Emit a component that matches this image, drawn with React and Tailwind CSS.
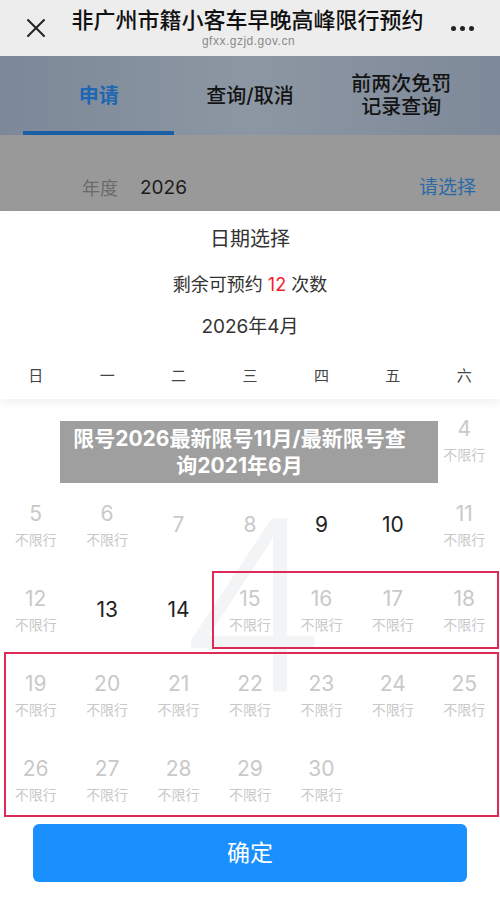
import React from "react";

const weekdays = ["日", "一", "二", "三", "四", "五", "六"];

// kind: "limit" = gray with 不限行, "off" = gray number only, "open" = selectable
// 1–3 April sit under the caption banner, so they are left blank
const weeks = [
  [null, null, null, null, null, null, { d: 4, k: "limit" }],
  [{ d: 5, k: "limit" }, { d: 6, k: "limit" }, { d: 7, k: "off" }, { d: 8, k: "off" }, { d: 9, k: "open" }, { d: 10, k: "open" }, { d: 11, k: "limit" }],
  [{ d: 12, k: "limit" }, { d: 13, k: "open" }, { d: 14, k: "open" }, { d: 15, k: "limit" }, { d: 16, k: "limit" }, { d: 17, k: "limit" }, { d: 18, k: "limit" }],
  [{ d: 19, k: "limit" }, { d: 20, k: "limit" }, { d: 21, k: "limit" }, { d: 22, k: "limit" }, { d: 23, k: "limit" }, { d: 24, k: "limit" }, { d: 25, k: "limit" }],
  [{ d: 26, k: "limit" }, { d: 27, k: "limit" }, { d: 28, k: "limit" }, { d: 29, k: "limit" }, { d: 30, k: "limit" }, null, null],
];

function DayCell({ day }) {
  if (!day) return <div className="h-[85px]" />;
  if (day.k === "limit") {
    return (
      <div className="h-[85px] flex flex-col items-center justify-center gap-[5px] pb-[2px]">
        <span className="text-[21px] leading-[24px] text-[#c9c9c9]">{day.d}</span>
        <span className="text-[14px] leading-[18px] text-[#c9c9c9]">不限行</span>
      </div>
    );
  }
  return (
    <div className="h-[85px] flex items-center justify-center pb-[4px]">
      <span className={`text-[21px] leading-[24px] ${day.k === "open" ? "text-[#222]" : "text-[#c9c9c9]"}`}>
        {day.d}
      </span>
    </div>
  );
}

export default function App() {
  return (
    <div className="w-[500px] h-[906px] overflow-hidden relative bg-white font-[Inter,'Noto_Sans_CJK_SC',sans-serif]">
      {/* browser top bar */}
      <div className="h-[56px] bg-[#ededed] flex items-center pl-[26px] pr-[26px] relative">
        <svg width="20" height="20" viewBox="0 0 20 20" className="text-[#222] shrink-0">
          <path d="M2 2 L18 18 M18 2 L2 18" stroke="currentColor" strokeWidth="2" strokeLinecap="round" />
        </svg>
        <div className="flex-1 flex flex-col items-center pb-[3px]">
          <div className="text-[22px] leading-[28px] font-medium text-[#111] mr-[2px] whitespace-nowrap">非广州市籍小客车早晚高峰限行预约</div>
          <div className="text-[12px] leading-[14px] text-[#8a8a8a] tracking-[0.5px] font-['Liberation_Sans',sans-serif]">gfxx.gzjd.gov.cn</div>
        </div>
        <div className="flex gap-[4px] items-center shrink-0">
          <span className="w-[5px] h-[5px] rounded-full bg-[#222]" />
          <span className="w-[5px] h-[5px] rounded-full bg-[#222]" />
          <span className="w-[5px] h-[5px] rounded-full bg-[#222]" />
        </div>
      </div>

      {/* dimmed tab bar */}
      <div className="h-[79px] bg-gradient-to-r from-[#7c8898] via-[#8d97a3] to-[#7e8999] grid grid-cols-3 px-[23px]">
        <div className="flex items-center justify-center text-[20px] font-bold text-[#1f66b3] relative">
          申请
          <div className="absolute left-0 right-0 bottom-0 h-[4px] bg-[#1a5ea6]" />
        </div>
        <div className="flex items-center justify-center text-[20px] font-medium text-[#141414]">查询/取消</div>
        <div className="flex flex-col items-center justify-center text-[20px] leading-[23px] font-medium text-[#141414]">
          <span>前两次免罚</span>
          <span>记录查询</span>
        </div>
      </div>

      {/* dimmed form */}
      <div className="h-[76px] bg-[#999999] flex items-center pl-[82px] pr-[24px] pt-[30px]">
        <span className="text-[18px] text-[#6a6a6a]">年度</span>
        <span className="text-[19px] text-[#1c1c1c] ml-[22px]">2026</span>
        <span className="ml-auto text-[19px] text-[#2c6aa6]">请选择</span>
      </div>

      {/* date picker sheet */}
      <div className="absolute left-0 right-0 top-[211px] bottom-0 bg-white rounded-t-[16px]">
        <div className="relative z-10 bg-white rounded-t-[16px] shadow-[0_5px_8px_rgba(0,0,0,0.05)]">
          <div className="h-[56px] flex items-center justify-center text-[20px] text-[#333]">日期选择</div>
          <div className="h-[34px] flex items-center justify-center text-[18px] text-[#333]">
            剩余可预约&nbsp;<span className="text-[#f5222d]">12</span>&nbsp;次数
          </div>
          <div className="h-[52px] flex items-center justify-center text-[19px] text-[#333]">2026年4月</div>
          <div className="h-[46px] grid grid-cols-7">
            {weekdays.map((w) => (
              <div key={w} className="flex items-center justify-center text-[15px] text-[#444]">{w}</div>
            ))}
          </div>
        </div>

        <div className="relative">
          <div className="absolute left-0 right-0 top-[88px] flex justify-center pointer-events-none" aria-hidden="true">
            <span className="text-[244px] leading-[244px] font-light text-[#f3f4f6] font-['Roboto',sans-serif] ml-[2px]">4</span>
          </div>
          <div className="relative grid grid-cols-7">
            {weeks.flat().map((day, i) => (
              <DayCell key={i} day={day} />
            ))}
          </div>

          {/* annotation boxes */}
          <div className="absolute left-[212px] top-[172px] w-[287px] h-[78px] border-2 border-[#de2a57]" />
          <div className="absolute left-[4px] top-[253px] w-[495px] h-[165px] border-2 border-[#de2a57]" />
        </div>

        <div className="px-[33px]">
          <button className="w-full h-[58px] rounded-[6px] bg-[#1a90ff] text-white text-[23px] flex items-center justify-center">
            确定
          </button>
        </div>
      </div>

      {/* caption banner */}
      <div className="absolute left-[60px] top-[421px] w-[378px] h-[62px] bg-[#9f9f9f] flex flex-col items-center justify-center pr-[19px] text-white font-bold text-[21px] leading-[27px] whitespace-nowrap">
        <span>限号2026最新限号11月/最新限号查</span>
        <span>询2021年6月</span>
      </div>
    </div>
  );
}
